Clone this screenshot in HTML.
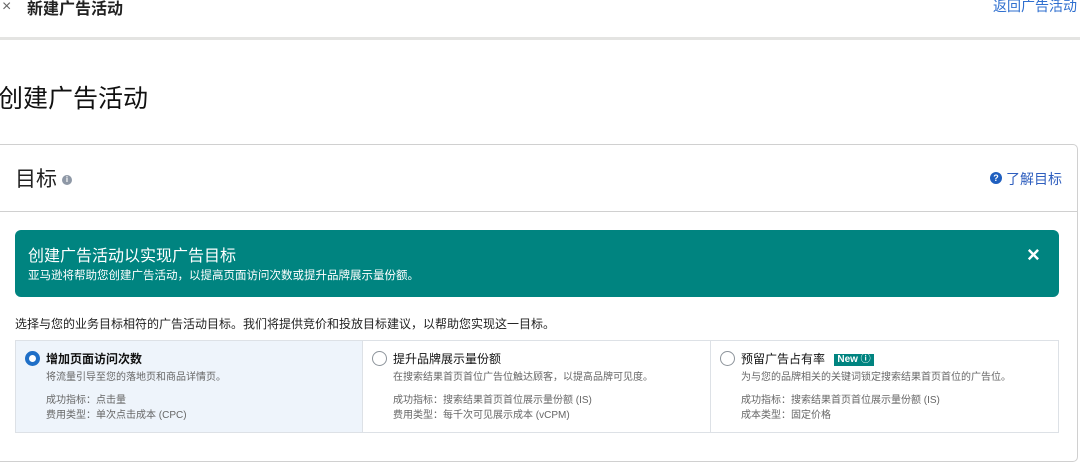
<!DOCTYPE html>
<html><head><meta charset="utf-8"><style>
*{margin:0;padding:0;box-sizing:border-box}
body{width:1080px;height:469px;overflow:hidden;background:#fff;font-family:"Liberation Sans","Noto Sans CJK SC",sans-serif;color:#111;position:relative}
.a{position:absolute;white-space:nowrap}
.opt{position:absolute;top:340px;height:93px;border:1px solid #dde1e6}
.radio{position:absolute;left:9px;top:10px;width:15px;height:15px;border-radius:50%;border:1px solid #8d949b;background:#fff}
.t{position:absolute;left:30px;top:9px;font-size:12px;color:#111}
.d{position:absolute;left:30px;font-size:10px;color:#666}
</style></head><body>
<div class="a" style="left:2px;top:-2px;font-size:16px;color:#666">×</div>
<div class="a" style="left:27px;top:-5px;font-size:16px;font-weight:bold;color:#222">新建广告活动</div>
<div class="a" style="left:993px;top:-4px;font-size:14px;color:#2f6fcf">返回广告活动</div>
<div class="a" style="left:0;top:37px;width:1080px;height:3px;background:#e4e4e2"></div>
<div class="a" style="left:-2px;top:79px;font-size:25px;color:#111">创建广告活动</div>
<div class="a" style="left:-10px;top:144px;width:1088px;height:318px;border:1px solid #d0d0d0;border-radius:5px"></div>
<div class="a" style="left:0;top:211px;width:1077px;height:1px;background:#d0d0d0"></div>
<div class="a" style="left:15px;top:163px;font-size:21px;color:#222">目标</div>
<div class="a" style="left:62px;top:175px;width:10px;height:10px;border-radius:50%;background:#8e98a6;color:#fff;font-size:8px;text-align:center;line-height:10px;font-weight:bold">i</div>
<div class="a" style="left:990px;top:172px;width:12px;height:12px;border-radius:50%;background:#1f5fbf;color:#fff;font-size:9px;text-align:center;line-height:12px;font-weight:bold">?</div>
<div class="a" style="left:1006px;top:169px;font-size:14px;color:#2f5fbf">了解目标</div>
<div class="a" style="left:15px;top:230px;width:1044px;height:67px;background:#008480;border-radius:6px"></div>
<div class="a" style="left:28px;top:242px;font-size:16px;color:#fff">创建广告活动以实现广告目标</div>
<div class="a" style="left:28px;top:267px;font-size:11.5px;color:#fff">亚马逊将帮助您创建广告活动，以提高页面访问次数或提升品牌展示量份额。</div>
<div class="a" style="left:1027px;top:242px;font-size:22px;color:#fff;font-weight:bold">×</div>
<div class="a" style="left:15px;top:315px;font-size:12px;color:#222">选择与您的业务目标相符的广告活动目标。我们将提供竞价和投放目标建议，以帮助您实现这一目标。</div>
<div class="opt" style="left:15px;width:348px;background:#eef4fb">
<div class="radio" style="border:4px solid #1f6fc7"></div>
<div class="t" style="font-weight:bold">增加页面访问次数</div>
<div class="d" style="top:27px">将流量引导至您的落地页和商品详情页。</div>
<div class="d" style="top:50px">成功指标：点击量</div>
<div class="d" style="top:65px">费用类型：单次点击成本 (CPC)</div>
</div>
<div class="opt" style="left:362px;width:349px">
<div class="radio"></div>
<div class="t">提升品牌展示量份额</div>
<div class="d" style="top:27px">在搜索结果首页首位广告位触达顾客，以提高品牌可见度。</div>
<div class="d" style="top:50px">成功指标：搜索结果首页首位展示量份额 (IS)</div>
<div class="d" style="top:65px">费用类型：每千次可见展示成本 (vCPM)</div>
</div>
<div class="opt" style="left:710px;width:349px">
<div class="radio"></div>
<div class="t">预留广告占有率 <span style="display:inline-block;background:#008480;color:#fff;font-size:10px;font-weight:bold;padding:0 3px;line-height:12px;vertical-align:1px;margin-left:6px">New ⓘ</span></div>
<div class="d" style="top:27px">为与您的品牌相关的关键词锁定搜索结果首页首位的广告位。</div>
<div class="d" style="top:50px">成功指标：搜索结果首页首位展示量份额 (IS)</div>
<div class="d" style="top:65px">成本类型：固定价格</div>
</div>
</body></html>
